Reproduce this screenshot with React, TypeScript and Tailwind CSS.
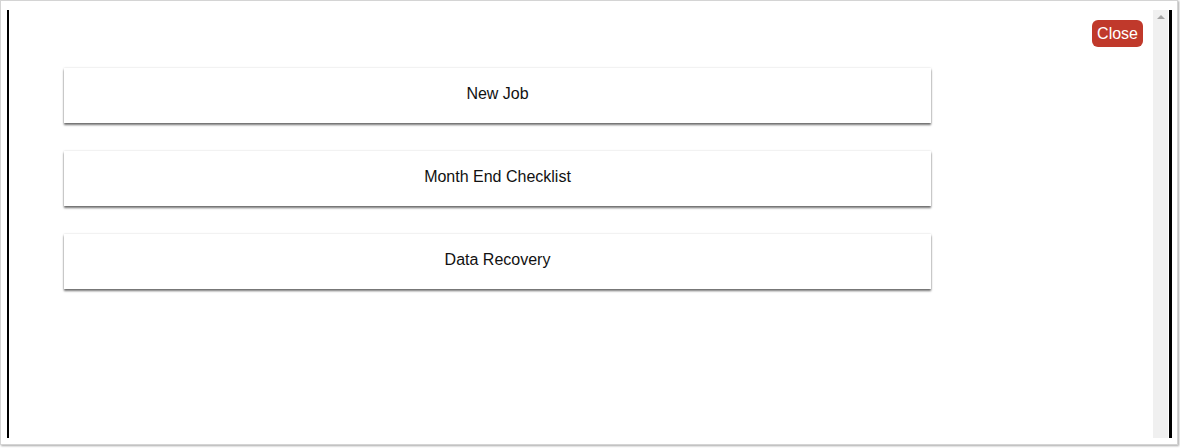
import React from "react";

const items = ["New Job", "Month End Checklist", "Data Recovery"];

export default function App() {
  return (
    <div className="w-[1180px] h-[448px] bg-white" style={{ fontFamily: '"Liberation Sans", Arial, sans-serif' }}>
      <div className="w-[1178px] h-[445px] border border-[#d4d4d4] shadow-[1px_1px_2px_rgba(0,0,0,0.35)] bg-white flex pt-[9px] pb-[6px] pl-[6px] pr-[5px]">
        <div className="w-[2px] bg-black shrink-0" />
        <div className="flex-1 flex flex-col">
          <div className="flex justify-end pt-[10px] pr-[10px]">
            <button className="h-[27px] px-[5px] rounded-[6px] bg-[#c0392b] text-white text-[16px] leading-[27px]">
              Close
            </button>
          </div>
          <div className="flex flex-col gap-[28px] mt-[21px] ml-[55px] w-[867px]">
            {items.map((t) => (
              <div
                key={t}
                className="h-[55px] pb-[4px] bg-white flex items-center justify-center text-[16px] text-[#111] shadow-[0_2px_2px_rgba(0,0,0,0.55),0_0_2px_rgba(0,0,0,0.15)]"
              >
                {t}
              </div>
            ))}
          </div>
        </div>
        <div className="w-[15px] bg-[#f0f0f0] shrink-0 flex justify-center pt-[5px]">
          <div className="w-0 h-0 border-l-[4px] border-r-[4px] border-b-[4px] border-l-transparent border-r-transparent border-b-[#a3a3a3]" />
        </div>
        <div className="w-[3px] bg-black shrink-0 ml-[1px]" />
      </div>
    </div>
  );
}
